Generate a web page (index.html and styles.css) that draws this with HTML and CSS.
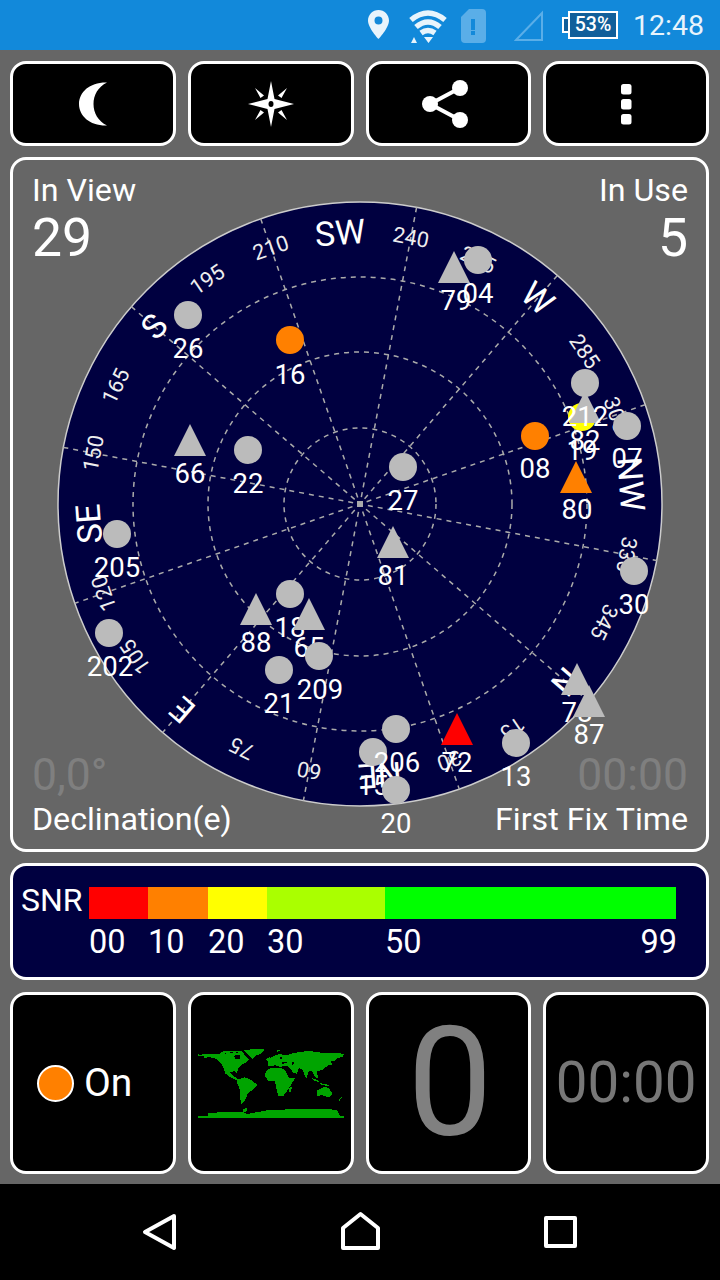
FILE: index.html
```html
<!DOCTYPE html>
<html>
  <head>
    <title>GPS Status</title>
    <link rel="stylesheet" href="styles.css">
  </head>
  <body>
    <div id="status-bar">
      <svg class="sb-pin" viewBox="369 0 21 50"><path class="sb-white" fill-rule="evenodd" d="M379.5 10C373.7 10 369 14.7 369 20.5C369 28 379.5 39 379.5 39C379.5 39 390 28 390 20.5C390 14.7 385.3 10 379.5 10ZM379.5 16.5A4 4 0 1 1 379.5 24.5A4 4 0 1 1 379.5 16.5Z"/></svg>
      <svg class="sb-wifi" viewBox="410 0 38 50">
        <path class="wifi-arc" d="M412 20Q429 6 446 20"/>
        <path class="wifi-arc" d="M417 27Q429 17 441 27"/>
        <path class="wifi-arc" d="M422 33Q429 28 436 33"/>
        <path class="sb-white" d="M425 37L434 37L429.500 43ZM412 43L415 37L418 43Z"/>
      </svg>
      <svg class="sb-sim" viewBox="462 0 25 50">
        <path class="sim-body" d="M470 9L483 9Q487 9 487 13L487 39Q487 43 483 43L466 43Q462 43 462 39L462 17Z"/>
        <path class="sim-mark" d="M472 19H476V30H472ZM472 31H476V35H472Z"/>
      </svg>
      <svg class="sb-signal" viewBox="515 0 29 50"><path class="signal-tri" d="M517 40L543 13L543 40Z"/></svg>
      <div class="battery"><span class="battery-nub"></span><span class="battery-body">53%</span></div>
      <div class="clock">12:48</div>
    </div>

    <div id="content">
      <div class="btn-row">
        <div class="tile btn">
          <svg class="btn-icon" viewBox="71 73 44 60"><path class="icon-fill" d="M107 81.500C90 81 79 91 79 103C79 115 90 125 107 124.500C98 120 93.500 112 93.500 103C93.500 94 98 86 107 81.500Z"/></svg>
        </div>
        <div class="tile btn">
          <svg class="btn-icon" viewBox="241 73 60 60">
            <path class="icon-fill" d="M271 80L274.500 98L294 103L274.500 108L271 126L267.500 108L248 103L267.500 98Z"/>
            <path class="icon-fill" d="M287 87L281.500 97L278 94.500ZM255 87L264 94.500L260.500 97ZM287 119L278 111.500L281.500 109ZM255 119L260.500 109L264 111.500Z"/>
            <ellipse class="icon-hole" cx="271" cy="103" rx="2.500" ry="3"/>
          </svg>
        </div>
        <div class="tile btn">
          <svg class="btn-icon" viewBox="415 73 60 60">
            <path class="share-line" d="M460 87L430 103L460 119"/>
            <circle class="icon-fill" cx="460" cy="87" r="8"/>
            <circle class="icon-fill" cx="430" cy="103" r="8"/>
            <circle class="icon-fill" cx="460" cy="119" r="8"/>
          </svg>
        </div>
        <div class="tile btn">
          <svg class="btn-icon" viewBox="606 73 40 60">
            <rect class="icon-fill" x="621" y="83" width="10.500" height="10.500" rx="2.500"/>
            <rect class="icon-fill" x="621" y="98" width="10.500" height="10.500" rx="2.500"/>
            <rect class="icon-fill" x="621" y="113" width="10.500" height="10.500" rx="2.500"/>
          </svg>
        </div>
      </div>

      <div class="tile sky-card">
        <svg id="sky" viewBox="10 157 699 695">
          <circle class="sky-disc" cx="360" cy="504" r="302"/>
          <circle class="ring" cx="360" cy="504" r="76"/>
          <circle class="ring" cx="360" cy="504" r="152"/>
          <circle class="ring" cx="360" cy="504" r="227"/>
          <line class="spoke" x1="58" y1="504" x2="662" y2="504" transform="rotate(10.8 360 504)"/>
          <line class="spoke" x1="58" y1="504" x2="662" y2="504" transform="rotate(40.8 360 504)"/>
          <line class="spoke" x1="58" y1="504" x2="662" y2="504" transform="rotate(70.8 360 504)"/>
          <line class="spoke" x1="58" y1="504" x2="662" y2="504" transform="rotate(100.8 360 504)"/>
          <line class="spoke" x1="58" y1="504" x2="662" y2="504" transform="rotate(130.8 360 504)"/>
          <line class="spoke" x1="58" y1="504" x2="662" y2="504" transform="rotate(160.8 360 504)"/>
          <rect class="hub" x="357" y="501" width="6" height="6"/>

          <!-- compass labels, rotated around the centre -->
          <text class="dir" x="360" y="244" transform="rotate(130.8 360 504)">N</text>
          <text class="deg" x="360" y="240" transform="rotate(145.8 360 504)">15</text>
          <text class="deg" x="360" y="240" transform="rotate(160.8 360 504)">30</text>
          <text class="dir" x="360" y="244" transform="rotate(175.8 360 504)">NE</text>
          <text class="deg" x="360" y="240" transform="rotate(190.8 360 504)">60</text>
          <text class="deg" x="360" y="240" transform="rotate(205.8 360 504)">75</text>
          <text class="dir" x="360" y="244" transform="rotate(220.8 360 504)">E</text>
          <text class="deg" x="360" y="240" transform="rotate(235.8 360 504)">105</text>
          <text class="deg" x="360" y="240" transform="rotate(250.8 360 504)">120</text>
          <text class="dir" x="360" y="244" transform="rotate(265.8 360 504)">SE</text>
          <text class="deg" x="360" y="240" transform="rotate(280.8 360 504)">150</text>
          <text class="deg" x="360" y="240" transform="rotate(295.8 360 504)">165</text>
          <text class="dir" x="360" y="244" transform="rotate(310.8 360 504)">S</text>
          <text class="deg" x="360" y="240" transform="rotate(325.8 360 504)">195</text>
          <text class="deg" x="360" y="240" transform="rotate(340.8 360 504)">210</text>
          <text class="dir" x="360" y="244" transform="rotate(355.8 360 504)">SW</text>
          <text class="deg" x="360" y="240" transform="rotate(10.8 360 504)">240</text>
          <text class="deg" x="360" y="240" transform="rotate(25.8 360 504)">255</text>
          <text class="dir" x="360" y="244" transform="rotate(40.8 360 504)">W</text>
          <text class="deg" x="360" y="240" transform="rotate(55.8 360 504)">285</text>
          <text class="deg" x="360" y="240" transform="rotate(70.8 360 504)">300</text>
          <text class="dir" x="360" y="244" transform="rotate(85.8 360 504)">NW</text>
          <text class="deg" x="360" y="240" transform="rotate(100.8 360 504)">330</text>
          <text class="deg" x="360" y="240" transform="rotate(115.8 360 504)">345</text>

          <!-- satellites, later ones paint over earlier ones -->
          <circle class="sat" cx="188" cy="315" r="14"/><text class="prn" x="188" y="358">26</text>
          <circle class="sat orange" cx="290" cy="340" r="14"/><text class="prn" x="290" y="384">16</text>
          <polygon class="sat" points="174,456 190,424 206,456"/><text class="prn" x="190" y="483">66</text>
          <circle class="sat" cx="248" cy="450" r="14"/><text class="prn" x="248" y="493">22</text>
          <circle class="sat" cx="403" cy="467" r="14"/><text class="prn" x="403" y="510">27</text>
          <polygon class="sat" points="438,283 454,251 470,283"/><text class="prn" x="456" y="310">79</text>
          <circle class="sat" cx="478" cy="260" r="14"/><text class="prn" x="478" y="303">04</text>
          <circle class="sat yellow" cx="582" cy="417" r="14"/><text class="prn" x="582" y="460">19</text>
          <polygon class="sat" points="569,423 585,391 601,423"/><text class="prn" x="585" y="450">82</text>
          <circle class="sat" cx="585" cy="383" r="14"/><text class="prn" x="585" y="426">212</text>
          <circle class="sat" cx="627" cy="426" r="14"/><text class="prn" x="627" y="468">07</text>
          <circle class="sat orange" cx="535" cy="436" r="14"/><text class="prn" x="535" y="478">08</text>
          <polygon class="sat orange" points="560,493 576,461 592,493"/><text class="prn" x="577" y="519">80</text>
          <polygon class="sat" points="377,558 393,526 409,558"/><text class="prn" x="393" y="585">81</text>
          <circle class="sat" cx="117" cy="534" r="14"/><text class="prn" x="117" y="577">205</text>
          <circle class="sat" cx="109" cy="633" r="14"/><text class="prn" x="110" y="676">202</text>
          <polygon class="sat" points="240,625 256,593 272,625"/><text class="prn" x="256" y="652">88</text>
          <circle class="sat" cx="290" cy="594" r="14"/><text class="prn" x="290" y="637">18</text>
          <polygon class="sat" points="293,630 309,598 325,630"/><text class="prn" x="309" y="657">65</text>
          <circle class="sat" cx="319" cy="656" r="14"/><text class="prn" x="320" y="699">209</text>
          <circle class="sat" cx="279" cy="670" r="14"/><text class="prn" x="279" y="713">21</text>
          <circle class="sat" cx="373" cy="752" r="14"/><text class="prn" x="373" y="795">15</text>
          <circle class="sat" cx="396" cy="729" r="14"/><text class="prn" x="397" y="772">206</text>
          <circle class="sat" cx="396" cy="790" r="14"/><text class="prn" x="396" y="833">20</text>
          <polygon class="sat red" points="441,745 457,713 473,745"/><text class="prn" x="457" y="772">72</text>
          <circle class="sat" cx="516" cy="743" r="14"/><text class="prn" x="516" y="786">13</text>
          <circle class="sat" cx="634" cy="571" r="14"/><text class="prn" x="634" y="614">30</text>
          <text class="prn" x="577" y="722">78</text><polygon class="sat" points="561,695 577,663 593,695"/>
          <polygon class="sat" points="573,717 589,685 605,717"/><text class="prn" x="589" y="744">87</text>
        </svg>
        <div class="sky-row">
          <div>
            <div class="stat-label">In View</div>
            <div class="stat-value">29</div>
          </div>
          <div class="align-right">
            <div class="stat-label">In Use</div>
            <div class="stat-value">5</div>
          </div>
        </div>
        <div class="sky-row">
          <div>
            <div class="stat-dim">0,0°</div>
            <div class="stat-label">Declination(e)</div>
          </div>
          <div class="align-right">
            <div class="stat-dim">00:00</div>
            <div class="stat-label">First Fix Time</div>
          </div>
        </div>
      </div>

      <div class="tile snr-card">
        <div class="snr-top">
          <div class="snr-title">SNR</div>
          <div class="snr-bar">
            <div class="seg seg-00"></div>
            <div class="seg seg-10"></div>
            <div class="seg seg-20"></div>
            <div class="seg seg-30"></div>
            <div class="seg seg-50"></div>
          </div>
        </div>
        <div class="snr-scale">
          <div class="seg-00">00</div>
          <div class="seg-10">10</div>
          <div class="seg-20">20</div>
          <div class="seg-30">30</div>
          <div class="seg-50 scale-last"><span>50</span><span>99</span></div>
        </div>
      </div>

      <div class="btn-row bottom-row">
        <div class="tile cell cell-on">
          <span class="on-dot"></span>
          <span class="on-text">On</span>
        </div>
        <div class="tile cell">
          <svg class="world" viewBox="54 54 437 211" shape-rendering="crispEdges">
            <!-- north america, greenland, arctic islands -->
            <path class="land" d="M55 70L60 74L75 70L100 72L120 70L124 64L150 62L185 62L192 72L206 88L198 98L186 102L176 112L170 128L164 122L150 126L160 136L174 148L168 150L150 140L136 130L130 112L122 98L110 86L88 80L74 84L72 77L55 76Z"/>
            <path class="land" d="M192 60L222 56L254 56L246 68L228 76L216 86L206 74Z"/>
            <!-- south america -->
            <path class="land" d="M172 148L195 141L214 150L232 163L218 178L204 188L194 212L184 222L180 204L179 178L172 160Z"/>
            <!-- africa -->
            <path class="land" d="M253 136L260 120L274 113L298 113L312 116L326 142L345 142L332 164L322 180L310 196L295 198L288 172L284 152L264 151Z"/>
            <!-- eurasia -->
            <path class="land" d="M262 92L274 81L294 72L322 74L342 68L385 62L430 68L470 68L490 71L488 80L470 84L462 92L452 92L456 104L442 106L428 118L410 124L414 146L402 136L396 122L386 122L378 144L366 118L356 112L350 130L338 126L326 110L318 106L300 110L285 105L265 108Z"/>
            <!-- australia -->
            <path class="land" d="M410 181L430 170L445 172L456 190L446 201L426 195L410 196Z"/>
            <!-- antarctica -->
            <path class="land" d="M55 258L85 256L85 248L150 244L190 246L200 251L260 240L340 236L400 235L470 238L480 258L490 258L490 264L55 264Z"/>
            <!-- islands -->
            <path class="land" d="M328 172L336 168L332 186L326 186ZM258 86L268 80L270 92L260 94ZM392 142L410 148L420 156L402 152ZM416 158L444 163L450 168L424 164ZM446 98L452 92L452 106ZM475 207L484 201L478 212ZM288 58L302 60L292 64ZM190 236L202 232L198 246L188 244Z"/>
            <path class="hole" d="M162 76L178 74L180 84L170 88L164 84ZM306 96L320 95L318 99L306 100ZM336 95L341 97L339 105L336 103ZM300 80L305 81L303 89L300 87ZM134 66L140 68L136 72ZM150 66L158 66L156 70ZM170 64L176 68L168 70Z"/>
          </svg>
        </div>
        <div class="tile cell"><span class="big-zero">0</span></div>
        <div class="tile cell"><span class="big-time">00:00</span></div>
      </div>
    </div>

    <div id="nav-bar">
      <svg class="nav-icon" viewBox="140 1210 40 50"><path class="nav-line" d="M174 1219L145 1235L174 1251Z"/></svg>
      <svg class="nav-icon" viewBox="340 1210 40 50"><path class="nav-line" d="M343 1251L343 1231L360.500 1217L378 1231L378 1251Z"/></svg>
      <svg class="nav-icon" viewBox="540 1210 40 50"><path class="nav-line" d="M546 1221H575V1249H546Z"/></svg>
    </div>
  </body>
</html>
```

FILE: styles.css
```css
body {
  margin: 0;
  width: 720px;
  height: 1280px;
  overflow: hidden;
  background-color: #666;
  color: #fff;
  font-family: Roboto, "Liberation Sans", sans-serif;
}

/* status bar */
#status-bar {
  height: 50px;
  display: flex;
  justify-content: flex-end;
  align-items: center;
  padding-right: 16px;
  background-color: #1289da;
}
#status-bar svg {
  height: 50px;
  display: block;
}
.sb-pin { width: 21px; }
.sb-wifi { width: 38px; margin-left: 20px; }
.sb-sim { width: 25px; margin-left: 14px; }
.sb-signal { width: 29px; margin-left: 28px; }
.sb-white { fill: #e8f4fc; }
.wifi-arc {
  fill: none;
  stroke: #e8f4fc;
  stroke-width: 5.5;
}
.sim-body { fill: #5aaee8; }
.sim-mark { fill: #1289da; }
.signal-tri {
  fill: none;
  stroke: #5aaee8;
  stroke-width: 2;
}
.battery {
  display: flex;
  align-items: center;
  margin-left: 19px;
}
.battery-nub {
  box-sizing: border-box;
  width: 6px;
  height: 16px;
  border: 2px solid #fff;
  border-right: none;
  background-color: #115f9a;
}
.battery-body {
  box-sizing: border-box;
  width: 50px;
  height: 28px;
  line-height: 24px;
  border: 2px solid #fff;
  background-color: #115f9a;
  text-align: center;
  font-size: 19.5px;
  font-weight: 500;
}
.clock {
  margin-left: 15px;
  font-size: 28.5px;
  color: #e8f4fc;
}

/* main column */
#content {
  height: 1134px;
  box-sizing: border-box;
  padding: 11px 11px 0 10px;
  display: flex;
  flex-direction: column;
  gap: 11px;
}
.tile {
  box-sizing: border-box;
  border: 3px solid #fff;
  border-radius: 16px;
}
.btn-row {
  display: grid;
  grid-template-columns: repeat(4, 1fr);
  gap: 12px;
  height: 85px;
}
.btn {
  background-color: #000;
  display: flex;
  align-items: center;
  justify-content: center;
}
.btn-icon {
  height: 60px;
  display: block;
}
.icon-fill { fill: #fff; }
.icon-hole { fill: #000; }
.share-line {
  fill: none;
  stroke: #fff;
  stroke-width: 4;
}
/* the share glyph sits left of the middle of its tile */
.btn:nth-child(3) .btn-icon { margin-left: -6px; }

/* sky plot */
.sky-card {
  position: relative;
  height: 695px;
  padding: 11px 18px 11px 19px;
  display: flex;
  flex-direction: column;
  justify-content: space-between;
}
#sky {
  position: absolute;
  left: -3px;
  top: -3px;
  width: 699px;
  height: 695px;
  overflow: visible;
}
.sky-disc {
  fill: #000040;
  stroke: #ccc;
  stroke-width: 1.5;
}
.ring,
.spoke {
  fill: none;
  stroke: #aaa;
  stroke-width: 1.5;
  stroke-dasharray: 5 5;
}
.hub { fill: #aaa; }
.dir,
.deg,
.prn {
  fill: #fff;
  text-anchor: middle;
}
.dir { font-size: 34px; }
.deg { font-size: 21.5px; fill: #eee; }
.prn { font-size: 27.5px; }
.sat { fill: #bbb; }
.sat.orange { fill: #ff8000; }
.sat.yellow { fill: #ffff00; }
.sat.red { fill: #ff0000; }

.sky-row {
  position: relative;
  display: flex;
  justify-content: space-between;
}
.align-right { text-align: right; }
.stat-label {
  font-size: 32.2px;
  line-height: 38px;
}
.stat-value {
  margin-top: 1px;
  font-size: 53.5px;
  line-height: 56px;
}
.stat-dim {
  font-size: 44.5px;
  line-height: 50px;
  color: #7f7f7f;
}

/* snr legend */
.snr-card {
  height: 117px;
  padding: 21px 0 0 8px;
  background-color: #000040;
}
.snr-top {
  display: flex;
}
.snr-title {
  width: 68px;
  font-size: 32px;
  line-height: 26px;
}
.snr-bar {
  display: flex;
  height: 32px;
}
.seg-00 { width: 59px; }
.seg-10 { width: 60px; }
.seg-20 { width: 59px; }
.seg-30 { width: 118px; }
.seg-50 { width: 291px; }
.seg.seg-00 { background-color: #ff0000; }
.seg.seg-10 { background-color: #ff8000; }
.seg.seg-20 { background-color: #ffff00; }
.seg.seg-30 { background-color: #aaff00; }
.seg.seg-50 { background-color: #00ff00; }
.snr-scale {
  display: flex;
  margin: 5px 0 0 68px;
  font-size: 32.5px;
  line-height: 36px;
}
.scale-last {
  display: flex;
  justify-content: space-between;
  width: 292px;
}

/* bottom tiles */
.bottom-row {
  height: 182px;
  margin-top: 1px;
}
.cell {
  background-color: #000;
  display: flex;
  align-items: center;
  justify-content: center;
}
.cell-on {
  justify-content: flex-start;
  padding-left: 24px;
  gap: 10px;
}
.on-dot {
  box-sizing: border-box;
  width: 37px;
  height: 37px;
  border: 2px solid #fff;
  border-radius: 50%;
  background-color: #ff8000;
}
.on-text {
  font-size: 39px;
}
.world {
  width: 146px;
  height: 71px;
  display: block;
}
.land { fill: #00a400; }
.hole { fill: #000; }
.big-zero {
  margin-left: 3px;
  font-size: 152px;
  line-height: 152px;
  color: #808080;
}
.big-time {
  font-size: 56.5px;
  color: #777;
}

/* nav bar */
#nav-bar {
  height: 96px;
  display: flex;
  align-items: center;
  justify-content: center;
  gap: 160px;
  background-color: #000;
}
.nav-icon {
  width: 40px;
  height: 50px;
  display: block;
}
.nav-line {
  fill: none;
  stroke: #fff;
  stroke-width: 4;
  stroke-linejoin: round;
}
```
